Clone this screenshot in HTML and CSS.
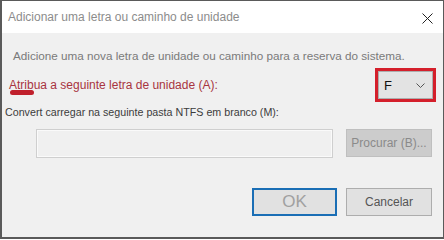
FILE: index.html
```html
<!DOCTYPE html>
<html lang="pt">
<head>
    <meta charset="UTF-8">
    <title>Adicionar uma letra ou caminho de unidade</title>
    <link rel="stylesheet" href="styles.css">
</head>
<body>
    <div class="dialog">
        <div class="title-bar">
            <span class="title">Adicionar uma letra ou caminho de unidade</span>
            <svg class="close" width="11" height="11" viewBox="0 0 11 11">
                <path d="M0.5 0.5 L10.5 10.5 M10.5 0.5 L0.5 10.5" stroke="#222" stroke-width="1" fill="none"/>
            </svg>
        </div>

        <div class="dialog-body">
            <p class="desc">Adicione uma nova letra de unidade ou caminho para a reserva do sistema.</p>

            <div class="letter-row">
                <span class="letter-label">Atribua a seguinte letra de unidade (A):<span class="smudge"></span></span>
                <div class="highlight">
                    <div class="select">
                        <span>F</span>
                        <svg width="9" height="5" viewBox="0 0 9 5">
                            <path d="M0.5 0.5 L4.5 4.5 L8.5 0.5" stroke="#555" stroke-width="1" fill="none"/>
                        </svg>
                    </div>
                </div>
            </div>

            <p class="folder-label">Convert carregar na seguinte pasta NTFS em branco (M):</p>

            <div class="folder-row">
                <div class="text-box"></div>
                <button class="btn btn-disabled">Procurar (B)...</button>
            </div>

            <div class="footer">
                <button class="btn btn-ok">OK</button>
                <button class="btn">Cancelar</button>
            </div>
        </div>
    </div>
</body>
</html>
```

FILE: styles.css
```css
body {
    margin: 0;
    background: #fff;
    font-family: "Liberation Sans", Arial, sans-serif;
}

.dialog {
    width: 444px;
    height: 239px;
    box-sizing: border-box;
    border-top: 1px solid #5a5a5a;
    border-left: 2px solid #5a5a5a;
    border-right: 1px solid #5a5a5a;
    border-bottom: 2px solid #5a5a5a;
    background: #f0f0f0;
    display: flex;
    flex-direction: column;
}

.title-bar {
    height: 32px;
    background: #fff;
    display: flex;
    align-items: center;
    justify-content: space-between;
    padding: 0 10px 0 6px;
}

.title {
    font-size: 12px;
    color: #8c8c8c;
}

.close {
    margin-top: 2px;
}

.dialog-body {
    flex: 1;
    padding: 0 11px 0 3px;
    display: flex;
    flex-direction: column;
}

.desc {
    margin: 16px 0 0 8px;
    font-size: 11.7px;
    color: #7a7a7a;
}

.letter-row {
    display: flex;
    justify-content: space-between;
    align-items: center;
    margin: 6px -4px 0 0;
}

.letter-label {
    position: relative;
    margin-left: 4px;
    font-size: 12px;
    color: #a8343f;
}

.smudge {
    position: absolute;
    left: 1px;
    top: 12px;
    width: 24px;
    height: 5px;
    border-radius: 3px;
    background: #c0202c;
    filter: blur(0.6px);
}

.highlight {
    border: 3px solid #d41f2b;
}

.select {
    box-sizing: border-box;
    width: 55px;
    height: 28px;
    border: 1px solid #adadad;
    background: #e3e3e3;
    display: flex;
    align-items: center;
    justify-content: space-between;
    padding: 0 7px 0 5px;
    font-size: 13px;
    color: #111;
}

.folder-label {
    margin: 4px 0 0 0;
    font-size: 10.7px;
    color: #3c3c3c;
}

.folder-row {
    display: flex;
    justify-content: space-between;
    margin: 11px 0 0 31px;
}

.text-box {
    width: 297px;
    height: 29px;
    box-sizing: border-box;
    border: 1px solid #cfcfcf;
    box-shadow: inset 0 0 0 1px #fafafa;
    background: #f0f0f0;
}

.btn {
    width: 86px;
    height: 28px;
    box-sizing: border-box;
    border: 1px solid #adadad;
    background: #e1e1e1;
    font-family: "Liberation Sans", Arial, sans-serif;
    font-size: 12px;
    color: #555;
    padding: 0;
}

.btn-disabled {
    background: #cccccc;
    border-color: #bfbfbf;
    color: #8a8a8a;
}

.footer {
    display: flex;
    justify-content: flex-end;
    gap: 9px;
    margin-top: 30px;
}

.btn-ok {
    width: 85px;
    border: 2px solid #1a6eb5;
    font-size: 17px;
    color: #a0a0a0;
}
```
